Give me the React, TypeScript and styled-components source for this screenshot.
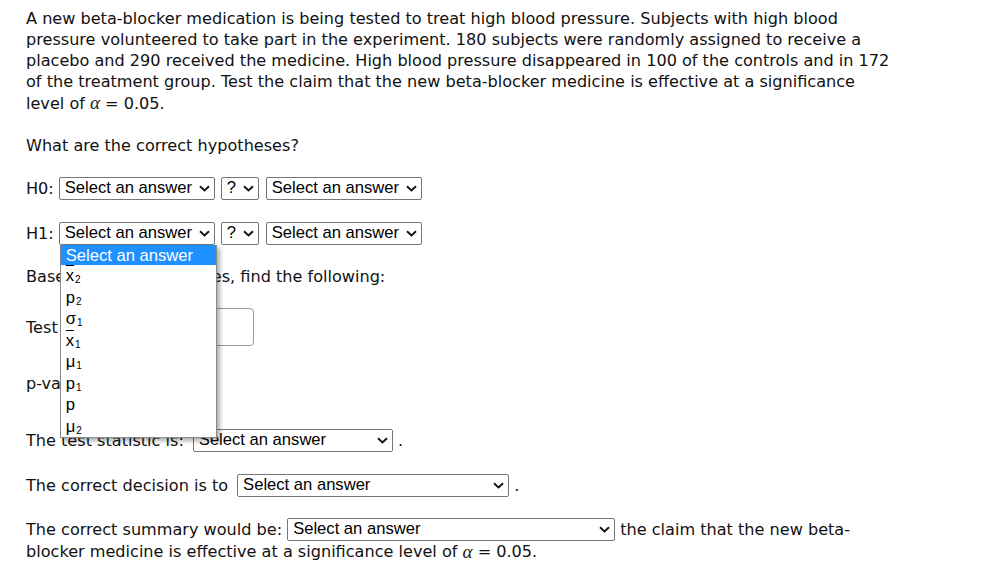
import React from 'react'
import styled, { createGlobalStyle } from 'styled-components'

const GlobalStyle = createGlobalStyle`
  body {
    margin: 0;
    background: #fff;
    color: #111;
    font-family: 'DejaVu Sans', 'Open Sans', sans-serif;
    font-size: 16.1px;
  }
`

const Page = styled.div`
  padding: 8px 26px 0;
  line-height: 21px;
`

const Para = styled.div`
  white-space: nowrap;
`

const Row = styled.div<{ $mt: number; $h?: number }>`
  display: flex;
  align-items: center;
  margin-top: ${(p) => p.$mt}px;
  min-height: ${(p) => p.$h ?? 21}px;
  white-space: pre;
`

const SelectWrap = styled.div<{ $ml: number }>`
  position: relative;
  display: flex;
  margin-left: ${(p) => p.$ml}px;
`

const SelectBox = styled.div<{ $w: number }>`
  box-sizing: border-box;
  width: ${(p) => p.$w}px;
  height: 23px;
  display: flex;
  align-items: center;
  justify-content: space-between;
  padding: 0 4px 0 5px;
  border: 1px solid #767676;
  border-radius: 2px;
  background: #fff;
  font-family: 'Liberation Sans', Arial, sans-serif;
  font-size: 16.6px;
  color: #000;
  line-height: 1;
`

const Menu = styled.div`
  position: absolute;
  top: 100%;
  left: 1px;
  width: 157px;
  box-sizing: border-box;
  background: #fff;
  border: 1px solid #8a8a8a;
  border-top: none;
  box-shadow: 3px 3px 4px rgba(0, 0, 0, 0.3);
  font-family: 'Liberation Sans', Arial, sans-serif;
  font-size: 16.6px;
  z-index: 10;
`

const Option = styled.div<{ $active?: boolean }>`
  height: ${(p) => (p.$active ? 20 : 21.5)}px;
  display: flex;
  align-items: center;
  padding-left: 5px;
  background: ${(p) => (p.$active ? '#1e90ff' : '#fff')};
  color: ${(p) => (p.$active ? '#fff' : '#000')};
  white-space: nowrap;
`

const Bar = styled.span`
  text-decoration: overline;
`

const Sub = styled.span`
  font-size: 10px;
  position: relative;
  top: 4px;
  margin-left: 1px;
`

const Alpha = styled.span`
  font-family: 'Liberation Serif', 'DejaVu Serif', serif;
  font-style: italic;
  font-size: 19px;
  color: #222;
`

const TextInput = styled.div`
  box-sizing: border-box;
  width: 102px;
  height: 38px;
  border: 1px solid #9a9a9a;
  border-radius: 4px;
  background: #fff;
`

const Chevron = () => (
  <svg width="11" height="7" viewBox="0 0 11 7">
    <path d="M1 1.2 L5.5 5.5 L10 1.2" fill="none" stroke="#111" strokeWidth="1.9" />
  </svg>
)

const Select = ({
  w,
  ml = 4,
  label = 'Select an answer',
  children,
}: {
  w: number
  ml?: number
  label?: string
  children?: React.ReactNode
}) => (
  <SelectWrap $ml={ml}>
    <SelectBox $w={w}>
      <span>{label}</span>
      <Chevron />
    </SelectBox>
    {children}
  </SelectWrap>
)

const options = [
  { base: 'x', bar: true, sub: '2' },
  { base: 'p', sub: '2' },
  { base: 'σ', sub: '1' },
  { base: 'x', bar: true, sub: '1' },
  { base: 'μ', sub: '1' },
  { base: 'p', sub: '1' },
  { base: 'p' },
  { base: 'μ', sub: '2' },
]

const App = () => {
  return (
    <Page>
      <GlobalStyle />
      <Para>
        A new beta-blocker medication is being tested to treat high blood pressure. Subjects with high blood
        <br />
        pressure volunteered to take part in the experiment. 180 subjects were randomly assigned to receive a
        <br />
        placebo and 290 received the medicine. High blood pressure disappeared in 100 of the controls and in 172
        <br />
        of the treatment group. Test the claim that the new beta-blocker medicine is effective at a significance
        <br />
        level of <Alpha>α</Alpha> = 0.05.
      </Para>
      <Row $mt={21}>What are the correct hypotheses?</Row>
      <Row $mt={21} $h={23}>
        H0:
        <Select w={156} ml={5} />
        <Select w={38} ml={6} label="?" />
        <Select w={156} ml={7} />
      </Row>
      <Row $mt={22} $h={23}>
        H1:
        <Select w={156} ml={5}>
          <Menu>
            <Option $active>Select an answer</Option>
            {options.map((o, i) => (
              <Option key={i}>
                {o.bar ? <Bar>{o.base}</Bar> : o.base}
                {o.sub && <Sub>{o.sub}</Sub>}
              </Option>
            ))}
          </Menu>
        </Select>
        <Select w={38} ml={6} label="?" />
        <Select w={156} ml={7} />
      </Row>
      <Row $mt={21}>Based on the hypotheses, find the following:</Row>
      <Row $mt={21} $h={38}>
        {'Test Statistic = '}
        <TextInput />
      </Row>
      <Row $mt={18} $h={38}>
        {'p-value = '}
        <TextInput />
      </Row>
      <Row $mt={27} $h={23}>
        The test statistic is:
        <Select w={200} ml={9} />
        {' .'}
      </Row>
      <Row $mt={22} $h={23}>
        The correct decision is to
        <Select w={272} ml={9} />
        {' .'}
      </Row>
      <Row $mt={21} $h={23}>
        The correct summary would be:
        <Select w={328} ml={5} />
        {' the claim that the new beta-'}
      </Row>
      <Row $mt={0}>
        blocker medicine is effective at a significance level of <Alpha>α</Alpha> = 0.05.
      </Row>
    </Page>
  )
}

export default App
